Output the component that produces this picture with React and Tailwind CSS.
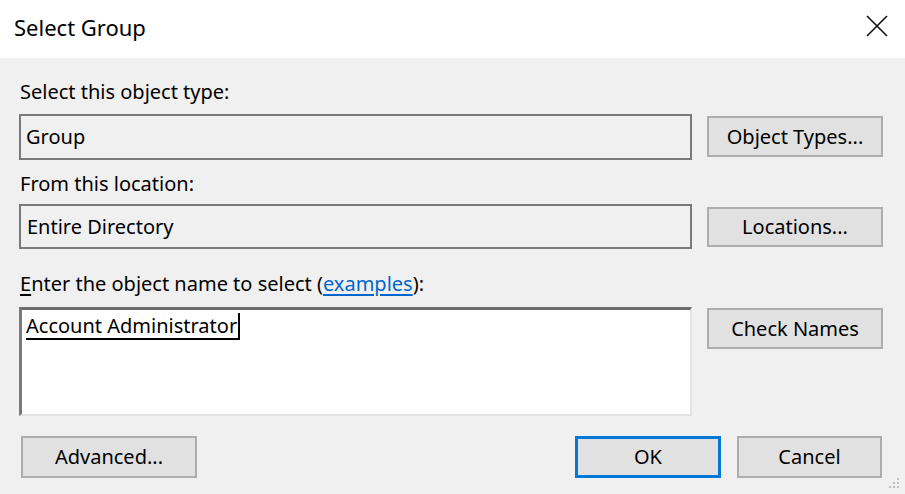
import React from 'react';

const font = { fontFamily: '"Noto Sans", "Open Sans", Arial, sans-serif' };

const Btn = ({ children, className = '', border = 'border-2 border-[#adadad]' }) => (
    <div className={`flex items-center justify-center bg-[#e1e1e1] ${border} text-[20px] text-black ${className}`}>
        {children}
    </div>
);

const ReadBox = ({ children, className = '' }) => (
    <div className={`w-[673px] flex items-center pl-[5px] bg-[#f0f0f0] border-2 border-[#7a7a7a] text-[20px] text-black ${className}`}>
        {children}
    </div>
);

const App = () => {
    return (
        <div className="w-[905px] h-[494px] bg-[#f0f0f0] flex flex-col relative overflow-hidden" style={font}>
            {/* title bar */}
            <div className="h-[58px] bg-white flex items-center justify-between pl-[14px] pr-[16px] shrink-0">
                <span className="text-[22px] text-black -mt-[4px]">Select Group</span>
                <svg width="24" height="24" viewBox="0 0 24 24" className="-mt-[6px]">
                    <path d="M2 2 L22 22 M22 2 L2 22" stroke="#111" strokeWidth="1.6" />
                </svg>
            </div>

            <div className="pl-[19px] pt-[22px] flex flex-col">
                {/* object type */}
                <div className="h-[24px] leading-[24px] text-[20px] text-black pl-[1px]">Select this object type:</div>
                <div className="flex gap-[15px] mt-[10px]">
                    <ReadBox className="h-[46px]">Group</ReadBox>
                    <Btn className="w-[176px] h-[41px] mt-[2px]">Object Types...</Btn>
                </div>

                {/* location */}
                <div className="h-[24px] leading-[24px] text-[20px] text-black pl-[1px] mt-[12px]">From this location:</div>
                <div className="flex gap-[15px] mt-[8px]">
                    <ReadBox className="h-[45px] pl-[6px]">Entire Directory</ReadBox>
                    <Btn className="w-[176px] h-[40px] mt-[3px]">Locations...</Btn>
                </div>

                {/* name */}
                <div className="h-[24px] leading-[24px] text-[20px] text-black pl-[1px] mt-[23px]">
                    <span className="underline underline-offset-[3px]">E</span>nter the object name to select (
                    <span className="text-[#0066cc] underline underline-offset-[3px]">examples</span>):
                </div>
                <div className="flex gap-[15px] mt-[11px]">
                    <div className="w-[673px] h-[109px] bg-white border-t-[3px] border-l-[3px] border-t-[#6e6e6e] border-l-[#7a7a7a] border-r-2 border-b-2 border-r-[#e3e3e3] border-b-[#e3e3e3] pl-[4px] pt-[3px]">
                        <span className="inline-flex items-end text-[20px] leading-[24px] text-black border-b-2 border-black">
                            Account Administrator
                            <span className="inline-block w-[2px] h-[25px] bg-black ml-[1px]"></span>
                        </span>
                    </div>
                    <Btn className="w-[176px] h-[41px] mt-[1px]">Check Names</Btn>
                </div>

                {/* bottom buttons */}
                <div className="flex mt-[20px] pr-[23px]">
                    <Btn className="w-[176px] h-[42px] ml-[2px]">Advanced...</Btn>
                    <div className="flex-1" />
                    <Btn className="w-[146px] h-[42px]" border="border-[3px] border-[#0078d7]">OK</Btn>
                    <Btn className="w-[145px] h-[42px] ml-[16px]">Cancel</Btn>
                </div>
            </div>

            {/* resize grip */}
            <svg width="16" height="16" viewBox="0 0 16 16" className="absolute right-[4px] bottom-[2px]">
                {[[12, 2], [8, 6], [12, 6], [4, 10], [8, 10], [12, 10]].map(([x, y], i) => (
                    <rect key={i} x={x} y={y} width="2" height="2" fill="#bdbdbd" />
                ))}
            </svg>
        </div>
    );
};

export default App;
